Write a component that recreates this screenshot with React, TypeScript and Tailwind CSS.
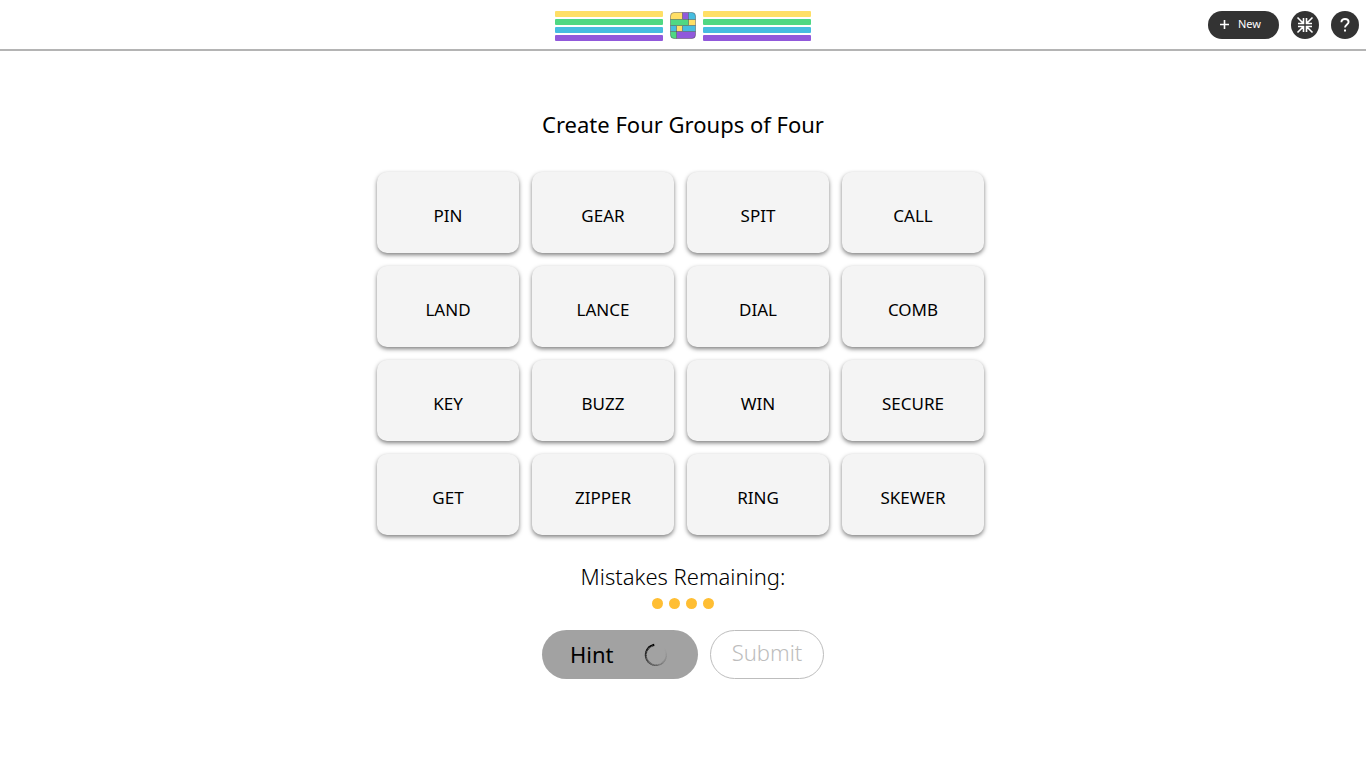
const words = [
  "PIN", "GEAR", "SPIT", "CALL",
  "LAND", "LANCE", "DIAL", "COMB",
  "KEY", "BUZZ", "WIN", "SECURE",
  "GET", "ZIPPER", "RING", "SKEWER",
];

const spinnerSteps = Array.from({ length: 30 }, (_, i) => i);

function Stripes() {
  return (
    <div className="flex w-[108px] flex-col gap-[2px]">
      <span className="h-[6px] rounded-[1px] bg-[#ffdf66]" />
      <span className="h-[6px] rounded-[1px] bg-[#4fd883]" />
      <span className="h-[6px] rounded-[1px] bg-[#46bde0]" />
      <span className="h-[6px] rounded-[1px] bg-[#9159db]" />
    </div>
  );
}

function Logo() {
  return (
    <svg width="26" height="27" viewBox="0 0 26 27" aria-hidden="true">
      <clipPath id="logo-clip">
        <rect x="0.5" y="0.5" width="25" height="26" rx="3.5" />
      </clipPath>
      <g clipPath="url(#logo-clip)">
        <path fill="#ffdf66" d="M0 0h12.500v7.500H0zM18.500 7.500H26v6h-7.500zM6.500 13.500h6v6h-6z" />
        <path fill="#9159db" d="M12.500 0h6v7.500h-6zM6.500 19.500H26V27H6.500z" />
        <path fill="#46bde0" d="M18.500 0H26v7.500h-7.500zM0 13.500h6.500v6H0zM12.500 13.500H26v6H12.500z" />
        <path fill="#4fd883" d="M0 7.500h18.500v6H0zM0 19.500h6.500V27H0z" />
        <path
          d="M0 7.500h26M0 13.500h26M0 19.500h26M12.500 0v7M18.500 0v13M6.500 14v13M12.500 14v5"
          fill="none"
          stroke="#333"
          strokeOpacity="0.45"
        />
      </g>
      <rect x="0.5" y="0.5" width="25" height="26" rx="3.5" fill="none" stroke="#333" strokeOpacity="0.4" />
    </svg>
  );
}

function Spinner() {
  return (
    <svg width="24" height="24" viewBox="0 0 24 24" aria-hidden="true">
      {spinnerSteps.map((i) => (
        <circle
          key={i}
          cx="12"
          cy="12"
          r="10.2"
          fill="none"
          stroke="#000"
          strokeWidth={2.2 - i * 0.03}
          pathLength="360"
          strokeDasharray="10.5 349.5"
          opacity={(1 - i / 30) ** 1.4}
          transform={`rotate(${-110 - i * 10} 12 12)`}
        />
      ))}
    </svg>
  );
}

export default function App() {
  return (
    <div className="min-h-screen bg-white font-['Noto_Sans',sans-serif] text-black">
      <header className="grid h-[51px] grid-cols-[1fr_auto_1fr] items-center border-b-2 border-[#b4b4b4]">
        <div />
        <div className="flex items-center gap-[7px] pt-[2px]">
          <Stripes />
          <Logo />
          <Stripes />
        </div>
        <nav className="flex justify-end gap-3 pr-[7px]">
          <button className="flex h-7 w-[71px] items-center gap-2 rounded-full bg-[#333] pl-[11px] text-[11px] text-white">
            <svg width="11" height="11" viewBox="0 0 11 11" aria-hidden="true">
              <path d="M5.5 1v9M1 5.5h9" stroke="currentColor" strokeWidth="1.6" />
            </svg>
            New
          </button>
          <button aria-label="Collapse" className="flex size-7 items-center justify-center rounded-full bg-[#333] text-white">
            <svg width="18" height="18" viewBox="0 0 18 18" fill="none" stroke="currentColor" strokeWidth="1.6" aria-hidden="true">
              <path d="M1.500 1.500l6 6M7.500 2v5.500H2M16.500 1.500l-6 6M10.500 2v5.500H16M1.500 16.500l6-6M2 10.500h5.500V16M16.500 16.500l-6-6M16 10.500h-5.500V16" />
            </svg>
          </button>
          <button aria-label="Help" className="flex size-7 items-center justify-center rounded-full bg-[#333] text-white">
            <svg width="10" height="14" viewBox="0 0 10 14" fill="none" aria-hidden="true">
              <path d="M1.400 4.200C1.400 2.200 3 1 5 1s3.600 1.200 3.600 3C8.600 6.300 5 6.600 5 9.500" stroke="currentColor" strokeWidth="1.9" />
              <path d="M4 11.500h2v2H4z" fill="currentColor" />
            </svg>
          </button>
        </nav>
      </header>

      <main className="flex flex-col items-center pt-[55px]">
        <h1 className="text-[22px] leading-9">Create Four Groups of Four</h1>

        <div className="mt-[30px] mr-[5px] grid w-full max-w-[607px] grid-cols-4 gap-[13px]">
          {words.map((word) => (
            <button
              key={word}
              className="h-[81px] rounded-[10px] bg-[#f4f4f4] pt-[6px] text-[17px] shadow-[0_2px_4px_rgba(0,0,0,0.5)]"
            >
              {word}
            </button>
          ))}
        </div>

        <p className="mt-[27px] text-[22px] leading-7 font-light">Mistakes Remaining:</p>
        <div className="mt-2 flex gap-[6px]">
          <span className="size-[11px] rounded-full bg-[#ffbe33]" />
          <span className="size-[11px] rounded-full bg-[#ffbe33]" />
          <span className="size-[11px] rounded-full bg-[#ffbe33]" />
          <span className="size-[11px] rounded-full bg-[#ffbe33]" />
        </div>

        <div className="mt-[21px] flex gap-3">
          <button className="flex h-[49px] w-[156px] items-center justify-between rounded-full bg-[#a2a2a2] pr-[30px] pl-7 text-[22px]">
            Hint
            <Spinner />
          </button>
          <button
            disabled
            className="h-[49px] w-[114px] rounded-full border border-[#bdbdbd] pb-1 text-[22px] font-light text-[#bdbdbd]"
          >
            Submit
          </button>
        </div>
      </main>
    </div>
  );
}
